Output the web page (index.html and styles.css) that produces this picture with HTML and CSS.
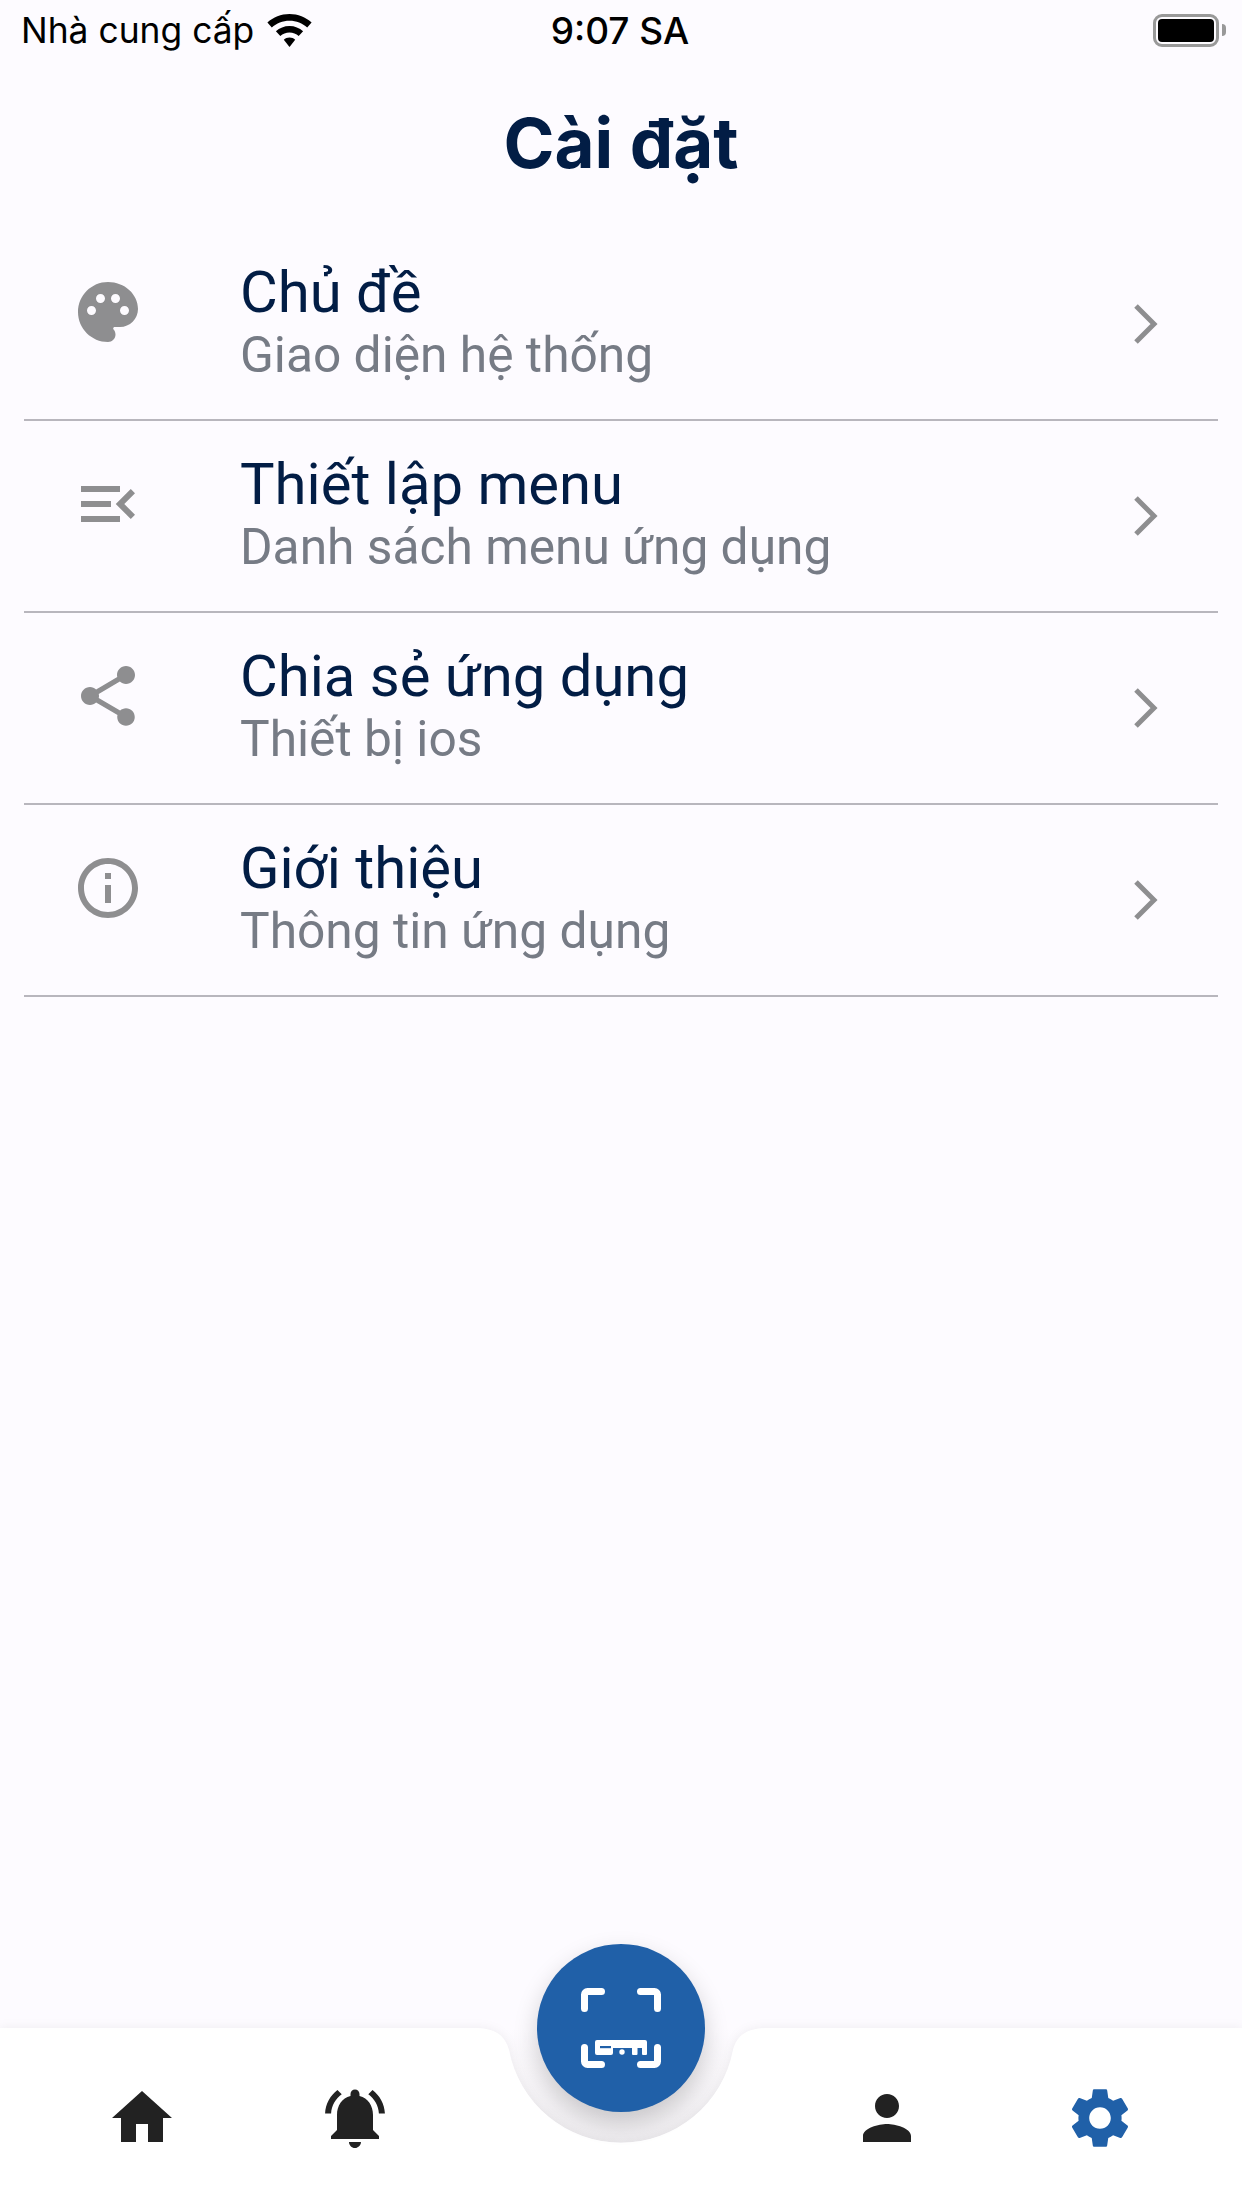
FILE: index.html
```html
<!DOCTYPE html>
<html lang="vi">
<head>
<meta charset="utf-8">
<title>Cài đặt</title>
<link rel="stylesheet" href="styles.css">
</head>
<body>
<div class="page">
  <header class="status">
    <div class="status-left">
      <span>Nhà cung cấp</span>
      <svg class="wifi" viewBox="0 0 45 33"><path d="M22.5 0C14 0 6.3 3.2.4 8.5l4.4 4.9C9.5 9.2 15.7 6.7 22.5 6.7s13 2.5 17.7 6.7l4.4-4.9C38.7 3.200 31 0 22.500 0z"/><path d="M22.500 12C17.300 12 12.500 14 8.900 17.200l4.400 4.900c2.400-2.200 5.700-3.500 9.200-3.500s6.800 1.300 9.200 3.500l4.400-4.900C32.500 14 27.700 12 22.500 12z"/><path d="M22.500 23.500c-2.200 0-4.200.8-5.700 2.200L22.500 33l5.700-7.300c-1.500-1.400-3.500-2.200-5.700-2.200z"/></svg>
    </div>
    <div class="status-time">9:07 SA</div>
    <div class="status-right">
      <div class="battery"><div class="battery-fill"></div></div>
      <div class="battery-nub"></div>
    </div>
  </header>

  <h1 class="title">Cài đặt</h1>

  <main class="list">
    <div class="row">
      <svg class="row-icon" viewBox="0 0 24 24"><path d="M12 2C6.490 2 2 6.490 2 12s4.490 10 10 10c1.380 0 2.500-1.120 2.500-2.500 0-.61-.23-1.200-.64-1.670-.08-.1-.13-.21-.13-.33 0-.28.22-.5.5-.5H16c3.310 0 6-2.690 6-6 0-4.960-4.490-9-10-9zm5.500 11c-.83 0-1.500-.67-1.500-1.500s.67-1.500 1.500-1.500 1.500.67 1.500 1.500-.67 1.500-1.500 1.500zm-3-4c-.83 0-1.500-.67-1.500-1.500S13.670 6 14.500 6s1.500.67 1.500 1.500S15.330 9 14.500 9zM5 11.500c0-.83.67-1.500 1.500-1.500s1.500.67 1.500 1.500S7.330 13 6.500 13 5 12.330 5 11.500zm6-4c0 .83-.67 1.500-1.500 1.500S8 8.330 8 7.500 8.670 6 9.500 6s1.500.67 1.500 1.500z"/></svg>
      <div class="row-text"><div class="row-title">Chủ đề</div><div class="row-sub">Giao diện hệ thống</div></div>
      <svg class="chev" viewBox="0 0 26 44"><path d="M4 4l18 18L4 40"/></svg>
    </div>
    <div class="row">
      <svg class="row-icon" viewBox="0 0 24 24"><path d="M3 18h13v-2H3v2zm0-5h10v-2H3v2zm0-7v2h13V6H3zm18 9.590L17.420 12 21 8.410 19.590 7l-5 5 5 5L21 15.590z"/></svg>
      <div class="row-text"><div class="row-title">Thiết lập menu</div><div class="row-sub">Danh sách menu ứng dụng</div></div>
      <svg class="chev" viewBox="0 0 26 44"><path d="M4 4l18 18L4 40"/></svg>
    </div>
    <div class="row">
      <svg class="row-icon" viewBox="0 0 24 24"><path d="M18 16.080c-.76 0-1.440.3-1.960.77L8.910 12.700c.05-.23.09-.46.09-.7s-.04-.47-.09-.7l7.050-4.110c.54.5 1.250.81 2.040.81 1.660 0 3-1.340 3-3s-1.340-3-3-3-3 1.340-3 3c0 .24.04.47.09.7L8.040 9.810C7.500 9.310 6.790 9 6 9c-1.660 0-3 1.340-3 3s1.340 3 3 3c.79 0 1.500-.31 2.040-.81l7.120 4.160c-.05.21-.08.43-.08.65 0 1.610 1.310 2.920 2.920 2.920 1.610 0 2.920-1.310 2.920-2.920s-1.310-2.920-2.920-2.920z"/></svg>
      <div class="row-text"><div class="row-title">Chia sẻ ứng dụng</div><div class="row-sub">Thiết bị ios</div></div>
      <svg class="chev" viewBox="0 0 26 44"><path d="M4 4l18 18L4 40"/></svg>
    </div>
    <div class="row">
      <svg class="row-icon" viewBox="0 0 24 24"><path d="M11 7h2v2h-2zm0 4h2v6h-2zm1-9C6.480 2 2 6.480 2 12s4.480 10 10 10 10-4.480 10-10S17.520 2 12 2zm0 18c-4.410 0-8-3.590-8-8s3.590-8 8-8 8 3.590 8 8-3.590 8-8 8z"/></svg>
      <div class="row-text"><div class="row-title">Giới thiệu</div><div class="row-sub">Thông tin ứng dụng</div></div>
      <svg class="chev" viewBox="0 0 26 44"><path d="M4 4l18 18L4 40"/></svg>
    </div>
  </main>

  <nav class="nav">
    <svg class="nav-bg" viewBox="0 0 1242 180">
      <defs>
        <linearGradient id="notch" x1="0" y1="0" x2="0" y2="1">
          <stop offset="0" stop-color="#fdfbff"/>
          <stop offset="0.35" stop-color="#f8f6f9"/>
          <stop offset="1" stop-color="#eeecef"/>
        </linearGradient>
      </defs>
      <path d="M473 0H769C745 0 737 8 733 22A114 114 0 0 1 509 22C505 8 497 0 473 0Z" fill="url(#notch)"/>
      <path class="nav-shape" d="M0 0H473C497 0 505 8 509 22A114 114 0 0 0 733 22C737 8 745 0 769 0H1242V180H0Z"/>
    </svg>
    <div class="tab tab-home"><svg class="tab-icon" viewBox="0 0 24 24"><path d="M10 20v-6h4v6h5v-8h3L12 3 2 12h3v8z"/></svg></div>
    <div class="tab tab-bell"><svg class="tab-icon" viewBox="0 0 24 24"><path d="M7.580 4.080L6.150 2.650C3.750 4.480 2.170 7.300 2.030 10.500h2c.15-2.650 1.510-4.970 3.550-6.420zm12.390 6.420h2c-.15-3.200-1.730-6.020-4.120-7.850l-1.420 1.430c2.020 1.450 3.390 3.770 3.540 6.420zM18 11c0-3.070-1.640-5.640-4.500-6.320V4c0-.83-.67-1.500-1.500-1.500s-1.500.67-1.500 1.500v.68C7.630 5.360 6 7.920 6 11v5l-2 2v1h16v-1l-2-2v-5zm-6 11c.14 0 .27-.01.4-.04.65-.14 1.180-.58 1.440-1.180.1-.24.15-.5.15-.78h-4c.01 1.100.9 2 2.010 2z"/></svg></div>
    <div class="tab tab-user"><svg class="tab-icon" viewBox="0 0 24 24"><path d="M12 12c2.210 0 4-1.790 4-4s-1.790-4-4-4-4 1.790-4 4 1.790 4 4 4zm0 2c-2.670 0-8 1.340-8 4v2h16v-2c0-2.660-5.330-4-8-4z"/></svg></div>
    <div class="tab tab-gear"><svg class="tab-icon active" viewBox="0 0 24 24"><path d="M19.140 12.940c.04-.3.06-.61.06-.94 0-.32-.02-.64-.07-.94l2.030-1.580c.18-.14.23-.41.12-.61l-1.920-3.320c-.12-.22-.37-.29-.59-.22l-2.390.96c-.5-.38-1.030-.7-1.620-.94l-.36-2.540c-.04-.24-.24-.41-.48-.41h-3.840c-.24 0-.43.17-.47.41l-.36 2.540c-.59.24-1.130.57-1.620.94l-2.390-.96c-.22-.08-.47 0-.59.22L2.740 8.870c-.12.21-.08.47.12.61l2.030 1.580c-.05.3-.09.63-.09.94s.02.64.07.94l-2.030 1.580c-.18.14-.23.41-.12.61l1.920 3.320c.12.22.37.29.59.22l2.390-.96c.5.38 1.030.7 1.620.94l.36 2.540c.05.24.24.41.48.41h3.840c.24 0 .44-.17.47-.41l.36-2.540c.59-.24 1.130-.56 1.620-.94l2.390.96c.22.08.47 0 .59-.22l1.920-3.320c.12-.22.07-.47-.12-.61l-2.010-1.580zM12 15.600c-1.980 0-3.600-1.620-3.600-3.600s1.620-3.600 3.600-3.600 3.600 1.620 3.600 3.600-1.620 3.600-3.600 3.600z"/></svg></div>
    <div class="fab">
      <svg class="fab-icon" viewBox="0 0 84 84">
        <path class="scan" d="M5.500 22.500V8.500a3 3 0 0 1 3-3H22.500M61.500 5.500H75.500a3 3 0 0 1 3 3V22.500M5.500 61.500V75.500a3 3 0 0 0 3 3H22.500M61.500 78.500H75.500a3 3 0 0 0 3-3V61.500"/>
        <path class="bar" d="M18 54H66a2 2 0 0 1 2 2V68a1 1 0 0 1-1 1H64a1 1 0 0 1-1-1V62H58.500V68a1 1 0 0 1-1 1H54a1 1 0 0 1-1-1V62H34V67a2 2 0 0 1-2 2H18a2 2 0 0 1-2-2V56a2 2 0 0 1 2-2z"/>
        <circle class="bar" cx="43" cy="66" r="2.700"/>
        <rect class="bar-cut" x="21" y="60" width="11" height="2.200"/>
      </svg>
    </div>
  </nav>
</div>
</body>
</html>
```

FILE: styles.css
```css
* { box-sizing: border-box; }
html, body { margin: 0; padding: 0; }
body { background: #fdfbff; font-family: "Roboto", sans-serif; }
.page { position: relative; width: 1242px; height: 2208px; display: flex; flex-direction: column; background: #fdfbff; overflow: hidden; }

.status { height: 60px; display: grid; grid-template-columns: 1fr auto 1fr; align-items: center; padding: 0 18px 0 16px; font-family: "Inter", sans-serif; font-size: 35.400px; color: #000; }
.status-left { display: flex; align-items: center; gap: 13px; padding-left: 5px; }
.wifi { width: 45px; height: 33px; fill: #000; }
.status-time { font-weight: 500; font-size: 37px; }
.status-right { display: flex; align-items: center; justify-content: flex-end; gap: 3px; margin-right: -2px; }
.battery { width: 66px; height: 33px; border: 3.500px solid #999; border-radius: 9px; padding: 2px; }
.battery-fill { width: 100%; height: 100%; background: #000; border-radius: 4px; }
.battery-nub { width: 4px; height: 12px; background: #999; border-radius: 0 6px 6px 0; }

.title { margin: 0; height: 169px; padding-top: 49px; text-align: center; font-family: "Inter", sans-serif; font-size: 69px; line-height: 69px; font-weight: 700; color: #021d45; }

.list { padding: 0 24px; display: flex; flex-direction: column; }
.row { height: 192px; display: flex; align-items: flex-start; border-bottom: 2px solid #b8b6bd; padding-right: 60px; }
.row-icon { width: 72px; height: 72px; margin: 47px 0 0 48px; fill: #8e8e90; flex: none; }
.row-text { margin: 29px 0 0 96px; flex: 1; }
.row-title { font-size: 58px; line-height: 68px; color: #021d45; }
.row-sub { font-size: 49.700px; line-height: 59px; color: #767b85; }
.chev { width: 26px; height: 44px; margin-top: 73px; fill: none; stroke: #8e8e90; stroke-width: 5; }

.nav { position: relative; margin-top: auto; height: 180px; }
.nav-bg { position: absolute; left: 0; top: 0; width: 1242px; height: 180px; overflow: visible; }
.nav-shape { fill: #fff; filter: drop-shadow(0 -1px 5px rgba(0,0,0,.05)); }
.tab { position: absolute; top: 54px; }
.tab-home { left: 106px; }
.tab-bell { left: 319px; }
.tab-user { left: 851px; }
.tab-gear { left: 1064px; }
.tab-icon { display: block; width: 72px; height: 72px; fill: #222; }
.tab-icon.active { fill: #2060a8; }
.fab { position: absolute; left: 537px; top: -84px; width: 168px; height: 168px; border-radius: 50%; background: #2060a8; box-shadow: 0 10px 24px rgba(0,0,0,.18); display: flex; align-items: center; justify-content: center; }
.fab-icon { width: 84px; height: 84px; }
.scan { fill: none; stroke: #fff; stroke-width: 7; stroke-linecap: round; }
.bar { fill: #fff; }
.bar-cut { fill: #2060a8; }
```
